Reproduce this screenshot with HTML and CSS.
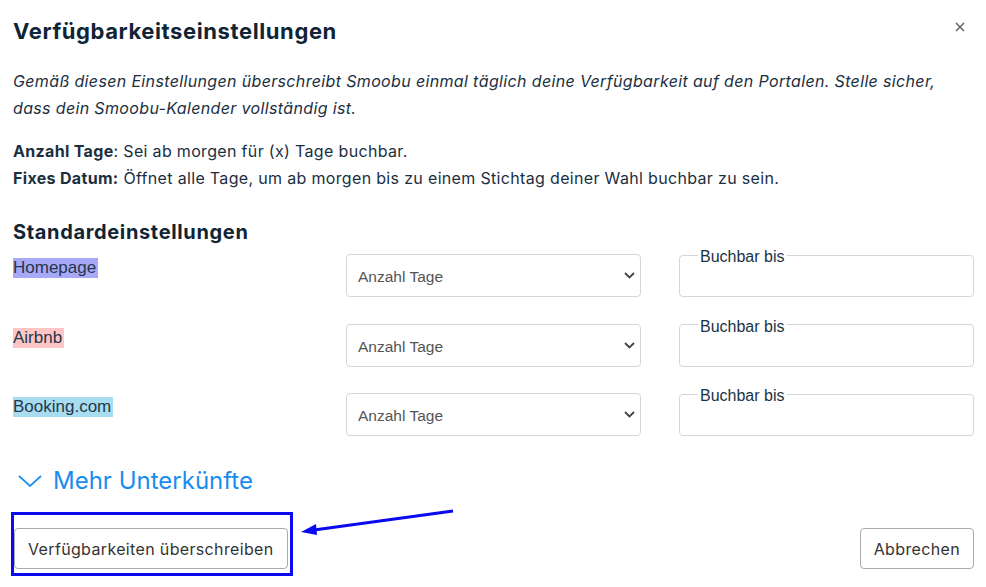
FILE: index.html
```html
<!DOCTYPE html>
<html lang="de">
<head>
  <meta charset="UTF-8">
  <title>Verfügbarkeitseinstellungen</title>
  <link rel="stylesheet" href="styles.css">
</head>
<body>

  <div class="modal">
    <div class="modal-head">
      <h1>Verfügbarkeitseinstellungen</h1>
      <button class="close" type="button" aria-label="Schließen">
        <svg width="10" height="10" viewBox="0 0 10 10">
          <path d="M1 1 L9 9 M9 1 L1 9" stroke="#666" stroke-width="1.6" fill="none"/>
        </svg>
      </button>
    </div>

    <p class="intro">Gemäß diesen Einstellungen überschreibt Smoobu einmal täglich deine Verfügbarkeit auf den Portalen. Stelle sicher, dass dein Smoobu-Kalender vollständig ist.</p>

    <p class="legend-text">
      <b>Anzahl Tage</b>: Sei ab morgen für (x) Tage buchbar.<br>
      <b>Fixes Datum:</b> Öffnet alle Tage, um ab morgen bis zu einem Stichtag deiner Wahl buchbar zu sein.
    </p>

    <h2>Standardeinstellungen</h2>

    <div class="channels">
      <div class="channel">
        <span class="channel-name homepage">Homepage</span>
        <div class="select-wrap">
          <select>
            <option>Anzahl Tage</option>
            <option>Fixes Datum</option>
          </select>
          <svg class="caret" width="11" height="7" viewBox="0 0 11 7"><path d="M1 1 L5.5 5.5 L10 1" stroke="#444" stroke-width="1.8" fill="none"/></svg>
        </div>
        <fieldset class="until">
          <legend>Buchbar bis</legend>
          <div class="until-body"></div>
        </fieldset>
      </div>

      <div class="channel">
        <span class="channel-name airbnb">Airbnb</span>
        <div class="select-wrap">
          <select>
            <option>Anzahl Tage</option>
            <option>Fixes Datum</option>
          </select>
          <svg class="caret" width="11" height="7" viewBox="0 0 11 7"><path d="M1 1 L5.5 5.5 L10 1" stroke="#444" stroke-width="1.8" fill="none"/></svg>
        </div>
        <fieldset class="until">
          <legend>Buchbar bis</legend>
          <div class="until-body"></div>
        </fieldset>
      </div>

      <div class="channel">
        <span class="channel-name booking">Booking.com</span>
        <div class="select-wrap">
          <select>
            <option>Anzahl Tage</option>
            <option>Fixes Datum</option>
          </select>
          <svg class="caret" width="11" height="7" viewBox="0 0 11 7"><path d="M1 1 L5.5 5.5 L10 1" stroke="#444" stroke-width="1.8" fill="none"/></svg>
        </div>
        <fieldset class="until">
          <legend>Buchbar bis</legend>
          <div class="until-body"></div>
        </fieldset>
      </div>
    </div>

    <a class="more" href="#">
      <svg width="24" height="12" viewBox="0 0 24 12"><path d="M1 1 L12 11 L23 1" stroke="#1a8cf0" stroke-width="1.7" fill="none"/></svg>
      Mehr Unterkünfte
    </a>

    <div class="modal-foot">
      <button class="btn" type="button">Verfügbarkeiten überschreiben</button>
      <button class="btn" type="button">Abbrechen</button>
    </div>

    <!-- annotation drawn on top of the screenshot -->
    <div class="mark"></div>
    <svg class="arrow" width="160" height="34" viewBox="0 0 160 34">
      <path d="M153 3 L14 22" stroke="#0a0af0" stroke-width="3" fill="none"/>
      <path d="M1 24 L16 16 L17 27 Z" fill="#0a0af0"/>
    </svg>
  </div>

</body>
</html>
```

FILE: styles.css
```css
body {
  margin: 0;
  background: white;
  font-family: Inter, "Open Sans", sans-serif;
  color: #1b2f3f;
}

.modal {
  position: relative;
  width: 986px;
  height: 587px;
  box-sizing: border-box;
  padding: 19px 12px 0 13px;
}

.modal-head {
  display: flex;
  justify-content: space-between;
}

.modal-head h1 {
  margin: 0;
  font-size: 22px;
  line-height: 25px;
  font-weight: 700;
  letter-spacing: 0.6px;
  color: #0f2435;
}

.close {
  border: none;
  background: none;
  padding: 0;
  margin: 3px 9px 0 0;
  width: 10px;
  height: 10px;
  line-height: 0;
  cursor: pointer;
}

.intro {
  max-width: 940px;
  margin: 24px 0 0 0;
  font-size: 16px;
  line-height: 27px;
  letter-spacing: 0.35px;
  font-style: italic;
}

.legend-text {
  margin: 16px 0 0 0;
  font-size: 16px;
  line-height: 27px;
  letter-spacing: 0.33px;
}

h2 {
  margin: 28px 0 0 0;
  font-size: 20px;
  line-height: 24px;
  font-weight: 700;
  letter-spacing: 0.65px;
  color: #0f2435;
}

.channels {
  margin-top: 2px;
  display: flex;
  flex-direction: column;
  gap: 18.5px;
}

.channel {
  display: flex;
  align-items: flex-end;
}

.channel-name {
  align-self: flex-start;
  margin-top: 12px;
  flex: 1;
  font-family: "Liberation Sans", Arial, sans-serif;
  font-size: 17px;
  line-height: 20px;
  color: #24374a;
}

.channel-name.homepage { background: linear-gradient(#a8a8f8, #a8a8f8) no-repeat; background-size: 85px 100%; }
.channel-name.airbnb { background: linear-gradient(#ffc4c4, #ffc4c4) no-repeat; background-size: 51px 100%; }
.channel-name.booking { background: linear-gradient(#a8dcf0, #a8dcf0) no-repeat; background-size: 100px 100%; }

.select-wrap {
  position: relative;
  width: 295px;
  height: 43px;
}

.select-wrap select {
  width: 100%;
  height: 100%;
  appearance: none;
  background: white;
  border: 1px solid #d2d6db;
  border-radius: 4px;
  padding: 2px 0 0 11px;
  font-family: "Liberation Sans", Arial, sans-serif;
  font-size: 15.5px;
  color: #555;
}

.caret {
  position: absolute;
  right: 6px;
  top: 18px;
  pointer-events: none;
}

.until {
  width: 295px;
  box-sizing: border-box;
  margin: 0 0 0 38px;
  padding: 0 0 0 18px;
  border: 1px solid #d2d6db;
  border-radius: 4px;
}

.until legend {
  padding: 4px 2px 0 2px;
  font-family: "Liberation Sans", Arial, sans-serif;
  font-size: 16px;
  line-height: 14px;
  color: #1b3342;
}

.until-body {
  height: 32px;
}

.more {
  display: flex;
  align-items: center;
  gap: 11px;
  margin: 30px 0 0 5px;
  font-size: 24px;
  line-height: 29px;
  color: #1a8cf0;
  text-decoration: none;
}

.modal-foot {
  display: flex;
  justify-content: space-between;
  margin-top: 33px;
  padding-left: 1px;
}

.btn {
  height: 41px;
  padding: 0 13px;
  background: white;
  border: 1px solid #aaa;
  border-radius: 4px;
  font-family: Inter, "Open Sans", sans-serif;
  font-size: 16px;
  letter-spacing: 0.35px;
  color: #333;
  cursor: pointer;
}

.mark {
  position: absolute;
  left: 11px;
  top: 512px;
  width: 282px;
  height: 64px;
  box-sizing: border-box;
  border: 3px solid #0a0af0;
}

.arrow {
  position: absolute;
  left: 300px;
  top: 508px;
}
```
